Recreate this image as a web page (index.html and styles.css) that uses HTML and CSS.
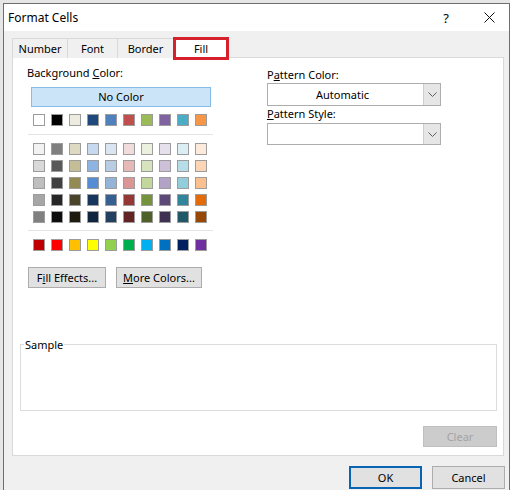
FILE: index.html
```html
<!DOCTYPE html>
<html lang="en">
<head>
    <meta charset="UTF-8">
    <title>Format Cells</title>
    <link rel="stylesheet" href="styles.css">
</head>
<body>
    <div class="dialog">
        <div class="titlebar">
            <span class="title">Format Cells</span>
            <span class="help">?</span>
            <span class="close">
                <svg width="11" height="11" viewBox="0 0 11 11"><path d="M0.5 0.5L10.5 10.5M10.5 0.5L0.5 10.5" stroke="#111" stroke-width="1" fill="none"/></svg>
            </span>
        </div>

        <div class="content">
            <div class="tabs">
                <div class="tab tab-number">Number</div>
                <div class="tab tab-font">Font</div>
                <div class="tab tab-border">Border</div>
                <div class="tab tab-fill">Fill</div>
            </div>

            <div class="panel">
                <div class="panel-top">
                    <!-- Cor de fundo -->
                    <div class="bg-col">
                        <div class="label">Background <u>C</u>olor:</div>
                        <div class="no-color">No Color</div>
                        <div class="swatch-row" id="theme-row"></div>
                        <div class="sep"></div>
                        <div class="swatch-grid" id="tint-grid"></div>
                        <div class="sep sep-low"></div>
                        <div class="swatch-row" id="standard-row"></div>
                        <div class="btn-row">
                            <div class="btn fill-effects">F<u>i</u>ll Effects...</div>
                            <div class="btn more-colors"><u>M</u>ore Colors...</div>
                        </div>
                    </div>

                    <!-- Padrão -->
                    <div class="pattern-col">
                        <div class="label">P<u>a</u>ttern Color:</div>
                        <div class="combo">
                            <span class="combo-value">Automatic</span>
                            <span class="combo-arrow"><svg width="9" height="5" viewBox="0 0 9 5"><path d="M0.5 0.5L4.5 4.5L8.5 0.5" stroke="#606060" fill="none"/></svg></span>
                        </div>
                        <div class="label"><u>P</u>attern Style:</div>
                        <div class="combo combo-style">
                            <span class="combo-value"></span>
                            <span class="combo-arrow"><svg width="9" height="5" viewBox="0 0 9 5"><path d="M0.5 0.5L4.5 4.5L8.5 0.5" stroke="#606060" fill="none"/></svg></span>
                        </div>
                    </div>
                </div>

                <div class="sample">
                    <span class="sample-label">Sample</span>
                </div>

                <div class="clear-row">
                    <div class="btn clear">Clear</div>
                </div>
            </div>

            <div class="footer">
                <div class="btn ok">OK</div>
                <div class="btn cancel">Cancel</div>
            </div>
        </div>
    </div>

    <script>
        // Paleta do tema (Office 2007) + cores padrão
        const theme = ['#ffffff', '#000000', '#eeece1', '#1f497d', '#4f81bd', '#c0504d', '#9bbb59', '#8064a2', '#4bacc6', '#f79646'];
        const tints = [
            ['#f2f2f2', '#7f7f7f', '#ddd9c3', '#c6d9f0', '#dbe5f1', '#f2dcdb', '#ebf1dd', '#e5e0ec', '#dbeef3', '#fdeada'],
            ['#d9d9d9', '#595959', '#c4bd97', '#8db3e2', '#b8cce4', '#e5b9b7', '#d7e3bc', '#ccc1d9', '#b7dde8', '#fbd5b5'],
            ['#bfbfbf', '#404040', '#948a54', '#548dd4', '#95b3d7', '#d99694', '#c3d69b', '#b2a2c7', '#92cddc', '#fac08f'],
            ['#a6a6a6', '#262626', '#4a452a', '#17365d', '#366092', '#953734', '#76923c', '#5f497a', '#31859b', '#e36c09'],
            ['#808080', '#0d0d0d', '#1d1b10', '#0f243e', '#244061', '#632423', '#4f6128', '#3f3151', '#205867', '#974806']
        ];
        const standard = ['#c00000', '#ff0000', '#ffc000', '#ffff00', '#92d050', '#00b050', '#00b0f0', '#0070c0', '#002060', '#7030a0'];

        function addSwatches(target, colors) {
            colors.forEach(function(c) {
                const s = document.createElement('div');
                s.className = 'swatch';
                s.style.background = c;
                target.appendChild(s);
            });
        }

        addSwatches(document.getElementById('theme-row'), theme);
        tints.forEach(function(row) {
            const r = document.createElement('div');
            r.className = 'swatch-row grid-row';
            addSwatches(r, row);
            document.getElementById('tint-grid').appendChild(r);
        });
        addSwatches(document.getElementById('standard-row'), standard);
    </script>
</body>
</html>
```

FILE: styles.css
```css
* {
    margin: 0;
    padding: 0;
    box-sizing: border-box;
}

body {
    width: 510px;
    height: 490px;
    overflow: hidden;
    background: #e6e6e6;
    padding: 3px 0 0 3px;
    font-family: "Noto Sans", "Segoe UI", sans-serif;
    font-size: 11px;
    color: #000;
}

.dialog {
    width: 507px;
    height: 487px;
    border: 1px solid #6e6e6e;
    border-bottom: none;
    background: #f0f0f0;
}

/* Barra de título */
.titlebar {
    height: 27px;
    background: #fff;
    display: flex;
    align-items: center;
}

.title {
    flex: 1;
    padding-left: 4px;
    font-size: 12px;
}

.help {
    width: 12px;
    text-align: center;
    font-size: 13px;
    margin-right: 32px;
}

.close {
    display: flex;
    margin-right: 14px;
}

.content {
    padding: 7px 5px 0 8px;
}

/* Abas */
.tabs {
    display: flex;
    height: 20px;
    align-items: flex-start;
}

.tab {
    height: 20px;
    border: 1px solid #d9d9d9;
    border-bottom: none;
    background: #f0f0f0;
    display: flex;
    align-items: center;
    justify-content: center;
    margin-left: -1px;
}

.tab-number {
    width: 56px;
    margin-left: 0;
}

.tab-font {
    width: 51px;
}

.tab-border {
    width: 57px;
}

.tab-fill {
    width: 56px;
    height: 23px;
    margin-top: -1px;
    background: #fff;
    border: 3px solid #d6202b;
    position: relative;
    z-index: 2;
}

/* Painel */
.panel {
    margin-top: -1px;
    height: 399px;
    background: #fff;
    border: 1px solid #d9d9d9;
}

.panel-top {
    display: flex;
    padding: 7px 0 0 14px;
}

.bg-col {
    width: 186px;
}

.label {
    height: 16px;
    line-height: 16px;
}

.no-color {
    margin: 6px 0 0 4px;
    width: 180px;
    height: 20px;
    background: #cce4f7;
    border: 1px solid #86bde8;
    text-align: center;
    line-height: 18px;
}

.swatch-row {
    display: flex;
    gap: 6px;
    margin-top: 7px;
    padding-left: 6px;
}

.swatch {
    width: 12px;
    height: 12px;
    border: 1px solid #9c9c9c;
}

.sep {
    margin: 8px 0 0 1px;
    height: 1px;
    background: #e3e3e3;
}

.sep-low {
    margin-top: 7px;
}

.sep + .swatch-row {
    margin-top: 8px;
}

.swatch-grid {
    margin-top: 8px;
    display: flex;
    flex-direction: column;
    gap: 5px;
}

.swatch-grid .grid-row {
    margin-top: 0;
}

.btn {
    height: 21px;
    background: #e1e1e1;
    border: 1px solid #adadad;
    display: flex;
    align-items: center;
    justify-content: center;
}

.btn-row {
    display: flex;
    gap: 10px;
    margin: 16px 0 0 1px;
}

.fill-effects {
    width: 78px;
}

.more-colors {
    width: 86px;
}

.pattern-col {
    width: 174px;
    margin: 2px 0 0 54px;
}

.combo {
    height: 23px;
    border: 1px solid #adadad;
    background: #fff;
    display: flex;
}

.combo-style {
    height: 22px;
    margin-top: 1px;
}

.combo-value {
    flex: 1;
    padding-left: 48px;
    line-height: 21px;
}

.combo-arrow {
    width: 17px;
    background: #e6e6e6;
    border-left: 1px solid #cdcdcd;
    display: flex;
    align-items: center;
    justify-content: center;
}

/* Amostra */
.sample {
    margin: 56px 6px 0 7px;
    height: 67px;
    border: 1px solid #dcdcdc;
}

.sample-label {
    display: inline-block;
    margin: -7px 0 0 3px;
    padding: 0 1px;
    background: #fff;
    line-height: 14px;
    vertical-align: top;
}

.clear-row {
    display: flex;
    justify-content: flex-end;
    margin-top: 15px;
    padding-right: 6px;
}

.clear {
    width: 74px;
    background: #cccccc;
    border-color: #bfbfbf;
    color: #a3a3a3;
}

/* Rodapé */
.footer {
    display: flex;
    justify-content: flex-end;
    gap: 10px;
    margin-top: 10px;
    margin-right: -1px;
}

.footer .btn {
    width: 73px;
    height: 23px;
}

.ok {
    border: 2px solid #0a64b4;
}
```
